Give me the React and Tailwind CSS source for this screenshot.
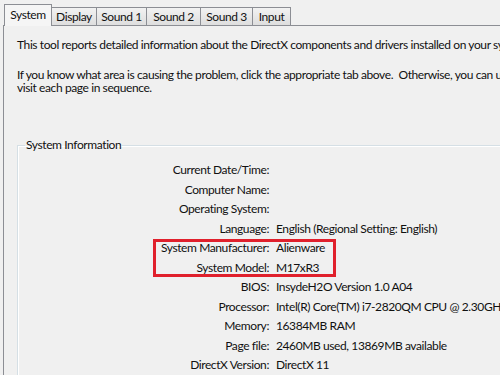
import React from 'react';

const tabs = [
    { name: 'System', w: 'w-[48px]' },
    { name: 'Display', w: 'w-[45px]' },
    { name: 'Sound 1', w: 'w-[50px]' },
    { name: 'Sound 2', w: 'w-[54px]' },
    { name: 'Sound 3', w: 'w-[52px]' },
    { name: 'Input', w: 'w-[38px]' },
];

const rows = [
    ['Current Date/Time:', ''],
    ['Computer Name:', ''],
    ['Operating System:', ''],
    ['Language:', 'English (Regional Setting: English)'],
    ['System Manufacturer:', 'Alienware'],
    ['System Model:', 'M17xR3'],
    ['BIOS:', 'InsydeH2O Version 1.0 A04'],
    ['Processor:', 'Intel(R) Core(TM) i7-2820QM CPU @ 2.30GHz (8 CPUs), ~2.3GHz'],
    ['Memory:', '16384MB RAM'],
    ['Page file:', '2460MB used, 13869MB available'],
    ['DirectX Version:', 'DirectX 11'],
];

export default function App() {
    return (
        <div className="relative w-[500px] h-[375px] overflow-hidden bg-[#f0f0f0] text-[12px] tracking-[-0.4px] text-[#111] font-['Lato',sans-serif] pl-[3px]">
            {/* tab strip */}
            <div className="flex items-end h-[25px] pl-px">
                {tabs.map((t, i) =>
                    i === 0 ? (
                        <div
                            key={t.name}
                            className={`${t.w} h-[22px] -mb-px z-10 flex items-center justify-center border border-b-0 border-[#8c8e94] bg-[#f5f5f5] pb-[2px]`}
                        >
                            {t.name}
                        </div>
                    ) : (
                        <div
                            key={t.name}
                            className={`${t.w} h-[18px] flex items-center justify-center border border-l-0 border-b-0 border-[#8c8e94] bg-gradient-to-b from-[#f2f2f2] to-[#dedede]`}
                        >
                            {t.name}
                        </div>
                    )
                )}
            </div>

            {/* tab page */}
            <div className="h-[360px] border-l border-t border-[#8c8e94] pl-[13px] pt-[12px] leading-[13px] whitespace-nowrap">
                <p>This tool reports detailed information about the DirectX components and drivers installed on your system.</p>
                <p className="mt-[17px]">If you know what area is causing the problem, click the appropriate tab above.&nbsp; Otherwise, you can use the "Next Page" button below to</p>
                <p>visit each page in sequence.</p>

                <fieldset className="mt-[44px] w-[600px] h-[300px] border border-[#d5dfe5] shadow-[inset_1px_1px_0_#fff] pl-[8px]">
                    <legend className="px-[1px] -ml-[1px] leading-[14px]">System Information</legend>
                    <div className="mt-[8px] grid grid-cols-[243px_1fr] gap-x-[7px] leading-[19.5px]">
                        {rows.map(([label, value]) => (
                            <React.Fragment key={label}>
                                <span className="text-right">{label}</span>
                                <span>{value}</span>
                            </React.Fragment>
                        ))}
                    </div>
                </fieldset>
            </div>

            {/* highlight drawn over the screenshot */}
            <div className="absolute left-[153px] top-[239px] w-[183px] h-[38px] border-[3px] border-[#e0202c]" />
        </div>
    );
}
